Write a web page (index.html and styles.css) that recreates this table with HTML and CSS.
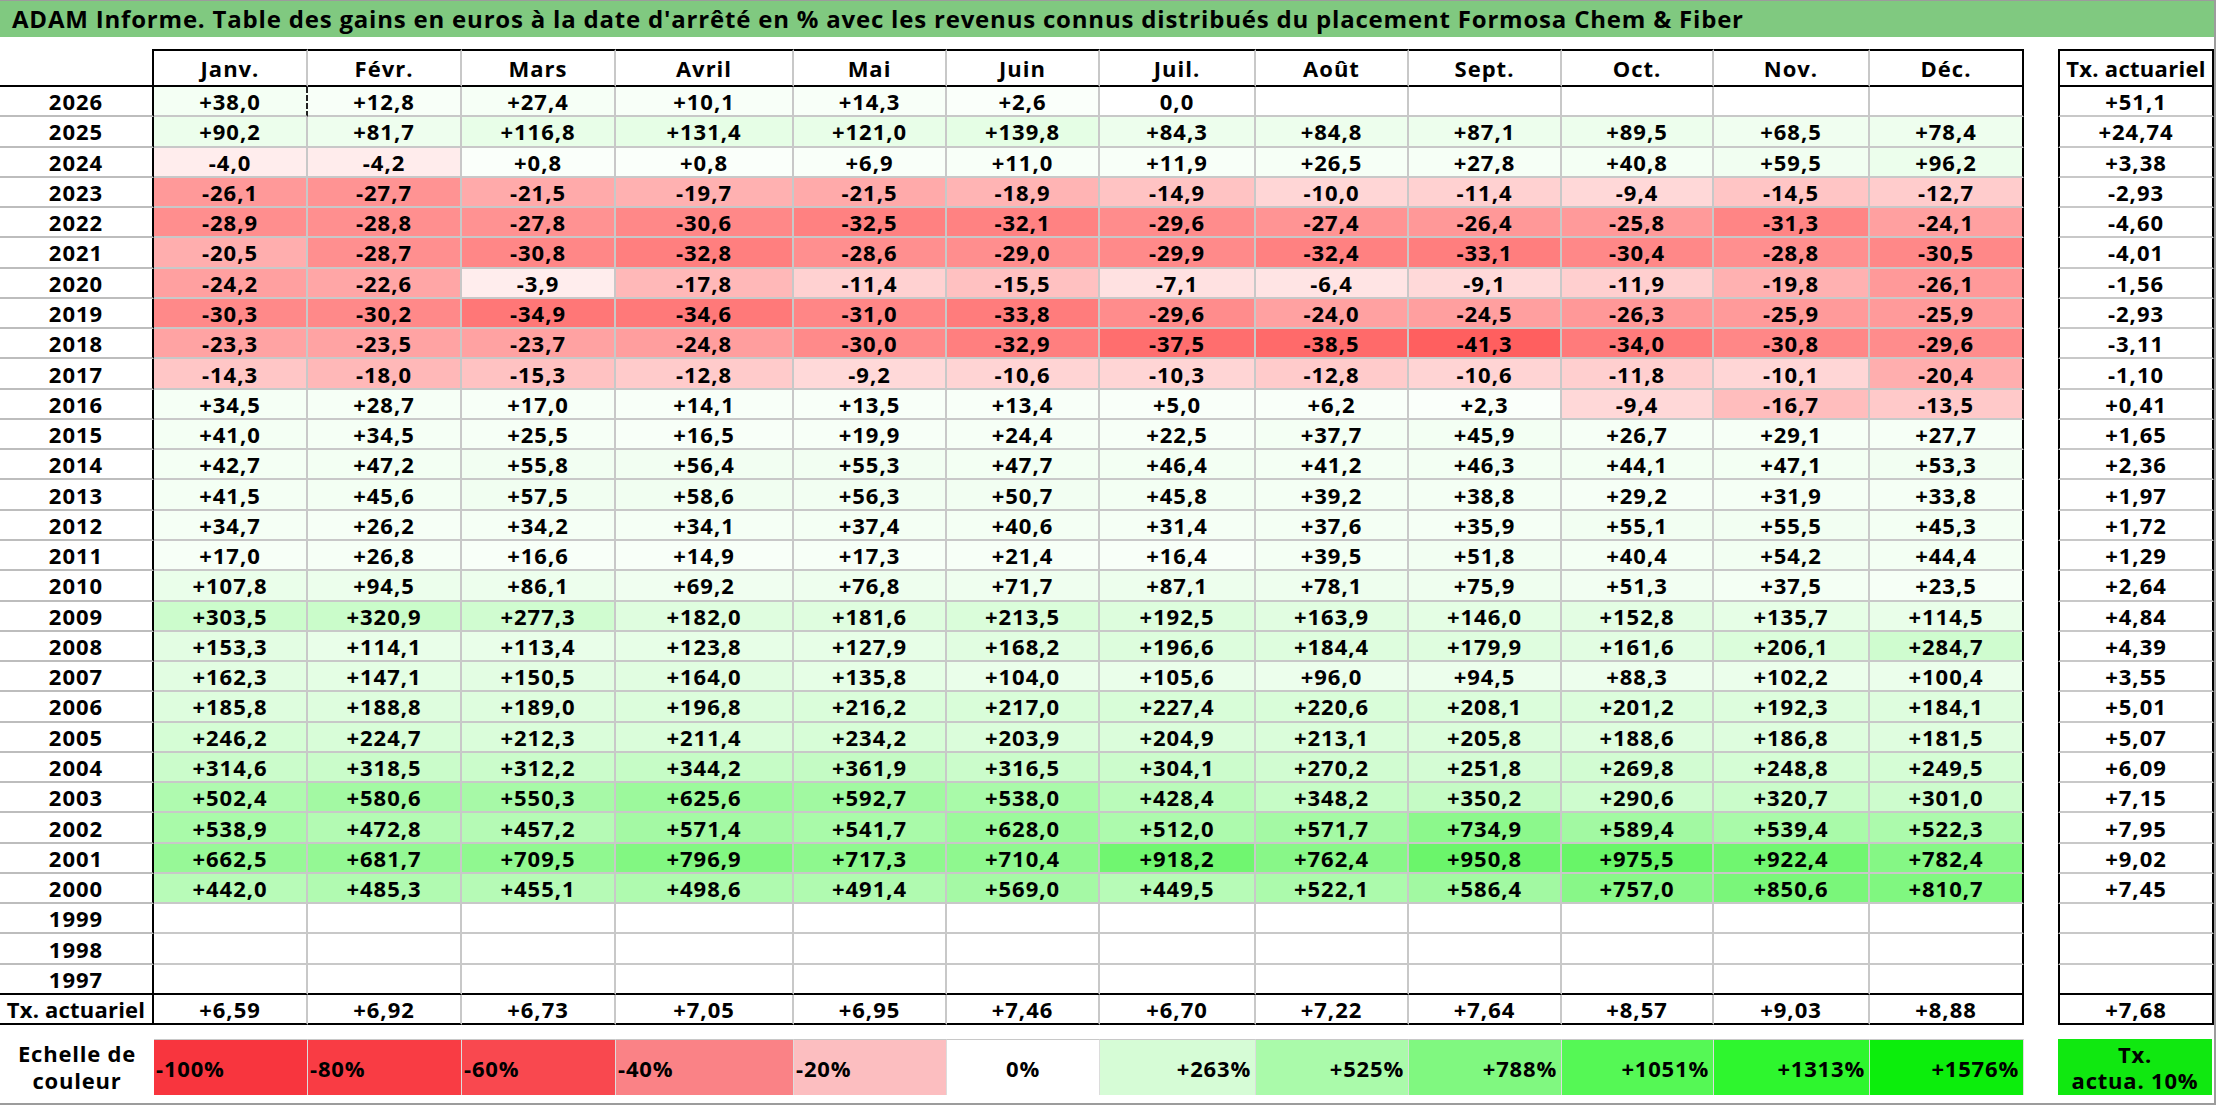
FILE: index.html
```html
<!DOCTYPE html>
<html lang="fr">
<head>
<meta charset="utf-8">
<title>ADAM Informe – Formosa Chem &amp; Fiber</title>
<link rel="stylesheet" href="styles.css">
</head>
<body>
<div class="sheet">
  <div class="title">ADAM Informe. Table des gains en euros à la date d'arrêté en % avec les revenus connus distribués du placement Formosa Chem &amp; Fiber</div>
  <div class="tables">
    <table class="main">
      <colgroup>
        <col class="w154"><col class="w154"><col class="w154"><col class="w154"><col class="w178">
        <col class="w153"><col class="w153"><col class="w156"><col class="w153"><col class="w153">
        <col class="w152"><col class="w156"><col class="w154">
      </colgroup>
      <thead>
        <tr>
          <th class="corner"></th>
          <th>Janv.</th><th>Févr.</th><th>Mars</th><th>Avril</th><th>Mai</th><th>Juin</th>
          <th>Juil.</th><th>Août</th><th>Sept.</th><th>Oct.</th><th>Nov.</th><th class="end">Déc.</th>
        </tr>
      </thead>
      <tbody id="mainBody"></tbody>
    </table>
    <table class="tx">
      <thead><tr><th>Tx. actuariel</th></tr></thead>
      <tbody id="txBody"></tbody>
    </table>
  </div>
  <div class="legend">
    <div class="lg-label w154">Echelle de<br>couleur</div>
    <div class="lg neg w154" style="background:#f8353e">-100%</div>
    <div class="lg neg w154" style="background:#f93c44">-80%</div>
    <div class="lg neg w154" style="background:#f9484f">-60%</div>
    <div class="lg neg w178" style="background:#fa8286">-40%</div>
    <div class="lg neg w153" style="background:#fcbec0">-20%</div>
    <div class="lg zero w153" style="background:#ffffff">0%</div>
    <div class="lg pos w156" style="background:#d6fcd6">+263%</div>
    <div class="lg pos w153" style="background:#aafaaa">+525%</div>
    <div class="lg pos w153" style="background:#80f880">+788%</div>
    <div class="lg pos w152" style="background:#55f855">+1051%</div>
    <div class="lg pos w156" style="background:#2ef62e">+1313%</div>
    <div class="lg pos w154" style="background:#0cee0c">+1576%</div>
    <div class="lg-gap"></div>
    <div class="lg-tx">Tx.<br>actua. 10%</div>
  </div>
</div>
<script src="script.js"></script>
</body>
</html>
```

FILE: styles.css
```css
* { box-sizing: border-box; }

body {
  margin: 0;
  background: #ffffff;
  color: #000000;
  font-family: "Open Sans", "Liberation Sans", sans-serif;
  font-weight: 700;
}

.sheet {
  width: 2216px;
  height: 1105px;
  border-top: 1px solid #9c9c9c;
  border-right: 2px solid #9c9c9c;
  border-bottom: 2px solid #9c9c9c;
  overflow: hidden;
}

.title {
  height: 36px;
  background: #80c980;
  font-size: 24px;
  letter-spacing: 0.8px;
  line-height: 36px;
  padding-left: 12px;
  white-space: nowrap;
}

.tables {
  display: flex;
  align-items: flex-start;
  margin-top: 12px;
}

table {
  border-collapse: separate;
  border-spacing: 0;
  table-layout: fixed;
}

.main { width: 2024px; }
.tx { width: 156px; margin-left: 34px; }

.w152 { width: 152px; }
.w153 { width: 153px; }
.w154 { width: 154px; }
.w156 { width: 156px; }
.w178 { width: 178px; }

th, td {
  padding: 0;
  text-align: center;
  font-size: 22px;
  line-height: 24px;
  letter-spacing: 1px;
  white-space: nowrap;
  overflow: hidden;
}

thead tr { height: 38px; }
tbody tr { height: 30.27px; }

/* main table */
.main th {
  border-top: 2px solid #000;
  border-bottom: 2px solid #000;
  border-right: 2px solid #c8c8c8;
  font-weight: 700;
}
.main th.corner {
  border-top: 0;
  border-right: 2px solid #000;
}
.main th.end { border-right: 2px solid #000; }

.main td {
  border-right: 2px solid #c8c8c8;
  border-bottom: 2px solid #c8c8c8;
}
.main td.year { border-right: 2px solid #000; border-bottom-color: #bdbdbd; }
.main td.end { border-right: 2px solid #000; }
.main td.dash { border-right: 2px dashed #222; }
.main tr.last td { border-bottom: 2px solid #000; }
.main tr.total td { border-bottom: 2px solid #000; }
.main tr.total td.year { letter-spacing: 0.2px; }

/* tx column */
.tx th {
  border: 2px solid #000;
  font-weight: 700;
  letter-spacing: 0.3px;
}
.tx td {
  border-left: 2px solid #000;
  border-right: 2px solid #000;
  border-bottom: 2px solid #c8c8c8;
}
.tx tr.last td { border-bottom: 2px solid #000; }
.tx tr.total td { border-bottom: 2px solid #000; }

/* legend */
.legend {
  display: flex;
  margin-top: 14px;
  height: 56px;
  font-size: 22px;
  letter-spacing: 0.8px;
}
.lg-label {
  flex: none;
  text-align: center;
  line-height: 27px;
  padding-top: 1px;
}
.lg {
  flex: none;
  display: flex;
  align-items: center;
  border-top: 1px solid #c8c8c8;
  border-right: 1px solid #dcdcdc;
}
.lg.neg { justify-content: flex-start; padding-left: 2px; }
.lg.zero { justify-content: center; }
.lg.pos { justify-content: flex-end; padding-right: 4px; }
.lg-gap { flex: none; width: 34px; }
.lg-tx {
  flex: none;
  width: 154px;
  background: #10e810;
  text-align: center;
  line-height: 26px;
  padding-top: 2px;
}
```

FILE: script.js
```js
const rows = [
  ["2026", "+38,0 +12,8 +27,4 +10,1 +14,3 +2,6 0,0 _ _ _ _ _", "+51,1"],
  ["2025", "+90,2 +81,7 +116,8 +131,4 +121,0 +139,8 +84,3 +84,8 +87,1 +89,5 +68,5 +78,4", "+24,74"],
  ["2024", "-4,0 -4,2 +0,8 +0,8 +6,9 +11,0 +11,9 +26,5 +27,8 +40,8 +59,5 +96,2", "+3,38"],
  ["2023", "-26,1 -27,7 -21,5 -19,7 -21,5 -18,9 -14,9 -10,0 -11,4 -9,4 -14,5 -12,7", "-2,93"],
  ["2022", "-28,9 -28,8 -27,8 -30,6 -32,5 -32,1 -29,6 -27,4 -26,4 -25,8 -31,3 -24,1", "-4,60"],
  ["2021", "-20,5 -28,7 -30,8 -32,8 -28,6 -29,0 -29,9 -32,4 -33,1 -30,4 -28,8 -30,5", "-4,01"],
  ["2020", "-24,2 -22,6 -3,9 -17,8 -11,4 -15,5 -7,1 -6,4 -9,1 -11,9 -19,8 -26,1", "-1,56"],
  ["2019", "-30,3 -30,2 -34,9 -34,6 -31,0 -33,8 -29,6 -24,0 -24,5 -26,3 -25,9 -25,9", "-2,93"],
  ["2018", "-23,3 -23,5 -23,7 -24,8 -30,0 -32,9 -37,5 -38,5 -41,3 -34,0 -30,8 -29,6", "-3,11"],
  ["2017", "-14,3 -18,0 -15,3 -12,8 -9,2 -10,6 -10,3 -12,8 -10,6 -11,8 -10,1 -20,4", "-1,10"],
  ["2016", "+34,5 +28,7 +17,0 +14,1 +13,5 +13,4 +5,0 +6,2 +2,3 -9,4 -16,7 -13,5", "+0,41"],
  ["2015", "+41,0 +34,5 +25,5 +16,5 +19,9 +24,4 +22,5 +37,7 +45,9 +26,7 +29,1 +27,7", "+1,65"],
  ["2014", "+42,7 +47,2 +55,8 +56,4 +55,3 +47,7 +46,4 +41,2 +46,3 +44,1 +47,1 +53,3", "+2,36"],
  ["2013", "+41,5 +45,6 +57,5 +58,6 +56,3 +50,7 +45,8 +39,2 +38,8 +29,2 +31,9 +33,8", "+1,97"],
  ["2012", "+34,7 +26,2 +34,2 +34,1 +37,4 +40,6 +31,4 +37,6 +35,9 +55,1 +55,5 +45,3", "+1,72"],
  ["2011", "+17,0 +26,8 +16,6 +14,9 +17,3 +21,4 +16,4 +39,5 +51,8 +40,4 +54,2 +44,4", "+1,29"],
  ["2010", "+107,8 +94,5 +86,1 +69,2 +76,8 +71,7 +87,1 +78,1 +75,9 +51,3 +37,5 +23,5", "+2,64"],
  ["2009", "+303,5 +320,9 +277,3 +182,0 +181,6 +213,5 +192,5 +163,9 +146,0 +152,8 +135,7 +114,5", "+4,84"],
  ["2008", "+153,3 +114,1 +113,4 +123,8 +127,9 +168,2 +196,6 +184,4 +179,9 +161,6 +206,1 +284,7", "+4,39"],
  ["2007", "+162,3 +147,1 +150,5 +164,0 +135,8 +104,0 +105,6 +96,0 +94,5 +88,3 +102,2 +100,4", "+3,55"],
  ["2006", "+185,8 +188,8 +189,0 +196,8 +216,2 +217,0 +227,4 +220,6 +208,1 +201,2 +192,3 +184,1", "+5,01"],
  ["2005", "+246,2 +224,7 +212,3 +211,4 +234,2 +203,9 +204,9 +213,1 +205,8 +188,6 +186,8 +181,5", "+5,07"],
  ["2004", "+314,6 +318,5 +312,2 +344,2 +361,9 +316,5 +304,1 +270,2 +251,8 +269,8 +248,8 +249,5", "+6,09"],
  ["2003", "+502,4 +580,6 +550,3 +625,6 +592,7 +538,0 +428,4 +348,2 +350,2 +290,6 +320,7 +301,0", "+7,15"],
  ["2002", "+538,9 +472,8 +457,2 +571,4 +541,7 +628,0 +512,0 +571,7 +734,9 +589,4 +539,4 +522,3", "+7,95"],
  ["2001", "+662,5 +681,7 +709,5 +796,9 +717,3 +710,4 +918,2 +762,4 +950,8 +975,5 +922,4 +782,4", "+9,02"],
  ["2000", "+442,0 +485,3 +455,1 +498,6 +491,4 +569,0 +449,5 +522,1 +586,4 +757,0 +850,6 +810,7", "+7,45"],
  ["1999", "_ _ _ _ _ _ _ _ _ _ _ _", ""],
  ["1998", "_ _ _ _ _ _ _ _ _ _ _ _", ""],
  ["1997", "_ _ _ _ _ _ _ _ _ _ _ _", ""]
];
const total = ["Tx. actuariel", "+6,59 +6,92 +6,73 +7,05 +6,95 +7,46 +6,70 +7,22 +7,64 +8,57 +9,03 +8,88", "+7,68"];

function cellColor(text) {
  if (!text) return "";
  const v = parseFloat(text.replace(",", "."));
  if (isNaN(v) || v === 0) return "";
  if (v < 0) {
    const g = Math.max(50, Math.round(252 - 3.8 * -v));
    return "rgb(255," + g + "," + g + ")";
  }
  const r = Math.max(14, Math.round(250 - 0.15 * v));
  const g = Math.round(255 - 0.01 * v);
  return "rgb(" + r + "," + g + "," + r + ")";
}

const mainBody = document.getElementById("mainBody");
const txBody = document.getElementById("txBody");

function addRow(row, cls) {
  const tr = document.createElement("tr");
  if (cls) tr.className = cls;
  const y = document.createElement("td");
  y.className = "year";
  y.textContent = row[0];
  tr.appendChild(y);
  row[1].split(" ").forEach(function (raw, i) {
    const td = document.createElement("td");
    const t = raw === "_" ? "" : raw;
    td.textContent = t;
    if (i === 11) td.classList.add("end");
    if (row[0] === "2026" && i === 0) td.classList.add("dash");
    if (cls !== "total") {
      const c = cellColor(t);
      if (c) td.style.background = c;
    }
    tr.appendChild(td);
  });
  mainBody.appendChild(tr);

  const tr2 = document.createElement("tr");
  if (cls) tr2.className = cls;
  const td2 = document.createElement("td");
  td2.textContent = row[2];
  tr2.appendChild(td2);
  txBody.appendChild(tr2);
}

rows.forEach(function (r, i) {
  addRow(r, i === rows.length - 1 ? "last" : "");
});
addRow(total, "total");
```
